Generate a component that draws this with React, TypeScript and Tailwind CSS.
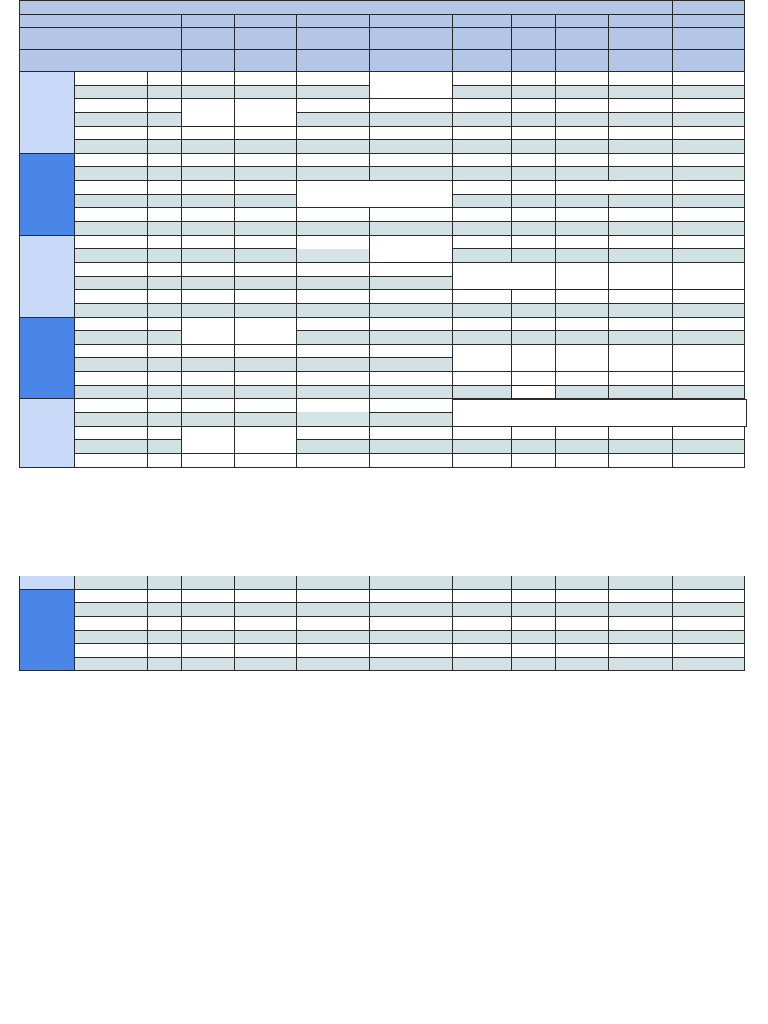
import React from "react"

type Merge = { r: number; c: number; rs: number; cs: number; bg?: string; over?: boolean }

const WHITE = "bg-white"
const TEAL = "bg-[#d2e1e4]"
const SPLIT = "bg-[linear-gradient(#ffffff_50%,#d6e4e6_50%)]"
const LIGHT = "bg-[#c9daf8]"
const DARK = "bg-[#4a86e8]"
const HEAD = "bg-[#b4c7e7]"
const LINE = "border-r border-b border-[#2a2a2a]"

// merged blocks in the body (row index from 0, column index 1..11)
const merges: Merge[] = [
  { r: 0, c: 6, rs: 2, cs: 1 },
  { r: 2, c: 3, rs: 2, cs: 1 },
  { r: 2, c: 4, rs: 2, cs: 1 },
  { r: 8, c: 5, rs: 2, cs: 2 },
  { r: 8, c: 9, rs: 1, cs: 2 },
  { r: 12, c: 5, rs: 2, cs: 1, bg: SPLIT },
  { r: 12, c: 6, rs: 2, cs: 1 },
  { r: 14, c: 7, rs: 2, cs: 2 },
  { r: 14, c: 9, rs: 2, cs: 1 },
  { r: 14, c: 10, rs: 2, cs: 1 },
  { r: 14, c: 11, rs: 2, cs: 1 },
  { r: 18, c: 3, rs: 2, cs: 1 },
  { r: 18, c: 4, rs: 2, cs: 1 },
  { r: 20, c: 7, rs: 2, cs: 1 },
  { r: 20, c: 8, rs: 2, cs: 1 },
  { r: 20, c: 9, rs: 2, cs: 1 },
  { r: 20, c: 10, rs: 2, cs: 1 },
  { r: 20, c: 11, rs: 2, cs: 1 },
  { r: 24, c: 5, rs: 2, cs: 1, bg: SPLIT },
  { r: 24, c: 7, rs: 2, cs: 5, over: true },
  { r: 26, c: 3, rs: 2, cs: 1 },
  { r: 26, c: 4, rs: 2, cs: 1 },
]

const whiteSpots = new Set(["23-8"])

function bodyCells(rows: number, offset: number, withMerges: boolean, startParity = 0) {
  const covered = new Set<string>()
  const out: React.ReactNode[] = []
  if (withMerges) {
    merges.forEach((m) => {
      for (let i = 0; i < m.rs; i++)
        for (let j = 0; j < m.cs; j++) covered.add(`${m.r + i}-${m.c + j}`)
      out.push(
        <div
          key={`m-${m.r}-${m.c}`}
          className={`${LINE} ${m.bg ?? WHITE} ${m.over ? "relative z-10 w-[calc(100%+2px)] border-t" : ""}`}
          style={{ gridRow: `${m.r + offset} / span ${m.rs}`, gridColumn: `${m.c + 1} / span ${m.cs}` }}
        />
      )
    })
  }
  for (let r = 0; r < rows; r++) {
    for (let c = 1; c <= 11; c++) {
      if (covered.has(`${r}-${c}`)) continue
      const teal = (r + startParity) % 2 === 1 && !(withMerges && whiteSpots.has(`${r}-${c}`))
      out.push(
        <div
          key={`c-${r}-${c}`}
          className={`${LINE} ${teal ? TEAL : WHITE}`}
          style={{ gridRow: r + offset, gridColumn: c + 1 }}
        />
      )
    }
  }
  return out
}

function MainTable() {
  const groups = [
    { start: 0, len: 6, bg: LIGHT },
    { start: 6, len: 6, bg: DARK },
    { start: 12, len: 6, bg: LIGHT },
    { start: 18, len: 6, bg: DARK },
    { start: 24, len: 5, bg: LIGHT },
  ]
  return (
    <div className="grid grid-cols-[55px_73px_34px_53px_62px_73px_83px_59px_44px_53px_64px_72px] grid-rows-[14px_13px_22px_22px_repeat(29,13.655px)] w-max border-l border-t border-[#2a2a2a]">
      {/* header */}
      <div className={`${LINE} ${HEAD}`} style={{ gridRow: 1, gridColumn: "1 / span 11" }} />
      <div className={`${LINE} ${HEAD}`} style={{ gridRow: 1, gridColumn: 12 }} />
      {[2, 3, 4].map((row) => (
        <React.Fragment key={row}>
          <div className={`${LINE} ${HEAD}`} style={{ gridRow: row, gridColumn: "1 / span 3" }} />
          {Array.from({ length: 9 }, (_, i) => (
            <div key={i} className={`${LINE} ${HEAD}`} style={{ gridRow: row, gridColumn: i + 4 }} />
          ))}
        </React.Fragment>
      ))}
      {groups.map((g) => (
        <div
          key={g.start}
          className={`${LINE} ${g.bg}`}
          style={{ gridRow: `${g.start + 5} / span ${g.len}`, gridColumn: 1 }}
        />
      ))}
      {bodyCells(29, 5, true)}
    </div>
  )
}

function SecondTable() {
  return (
    <div className="grid grid-cols-[55px_73px_34px_53px_62px_73px_83px_59px_44px_53px_64px_72px] grid-rows-[14px_repeat(6,13.655px)] w-max border-l border-[#2a2a2a]">
      <div className={`${LINE} ${LIGHT}`} style={{ gridRow: 1, gridColumn: 1 }} />
      <div className={`${LINE} ${DARK}`} style={{ gridRow: "2 / span 6", gridColumn: 1 }} />
      {bodyCells(7, 1, false, 1)}
    </div>
  )
}

export default function App() {
  return (
    <div className="min-h-[1024px] w-[768px] bg-white pl-[19px]">
      <MainTable />
      <div className="mt-[108px]">
        <SecondTable />
      </div>
    </div>
  )
}
